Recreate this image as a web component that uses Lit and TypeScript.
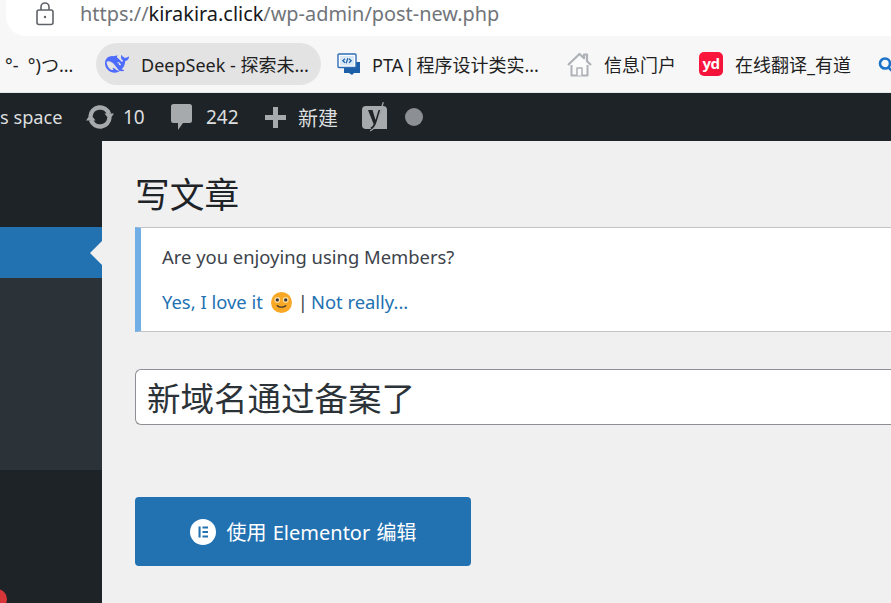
import { LitElement, html, css } from 'lit';
import { customElement } from 'lit/decorators.js';

const lockIcon = html`<svg width="20" height="24" viewBox="0 0 20 24" fill="none" stroke="#5f6368" stroke-width="1.6">
  <rect x="2" y="8" width="16" height="14.5" rx="2"></rect>
  <path d="M6 8V5a4 4 0 0 1 8 0v3"></path>
  <circle cx="10" cy="15" r="1.2" fill="#5f6368" stroke="none"></circle>
</svg>`;

const whaleIcon = html`<svg width="24" height="24" viewBox="0 0 24 24">
  <path fill="#4d6bfe" d="M23.748 4.482c-.254-.124-.364.113-.512.234-.051.039-.094.09-.137.136-.372.397-.806.657-1.373.626-.829-.046-1.537.214-2.163.848-.133-.782-.575-1.248-1.247-1.548-.352-.156-.708-.311-.955-.65-.172-.241-.219-.51-.305-.774-.055-.16-.11-.323-.293-.35-.2-.031-.278.136-.356.276-.313.572-.434 1.202-.422 1.84.027 1.436.633 2.58 1.838 3.393.137.093.172.187.129.323-.082.28-.18.552-.266.833-.055.179-.137.217-.329.14a5.526 5.526 0 01-1.736-1.18c-.857-.828-1.631-1.742-2.597-2.458a11.365 11.365 0 00-.689-.471c-.985-.957.13-1.743.388-1.836.27-.098.093-.432-.779-.428-.872.004-1.67.295-2.687.684a3.055 3.055 0 01-.465.137 9.597 9.597 0 00-2.883-.102c-1.885.21-3.39 1.102-4.497 2.623C.082 8.606-.231 10.684.152 12.85c.403 2.284 1.569 4.175 3.36 5.653 1.858 1.533 3.997 2.284 6.438 2.14 1.482-.085 3.133-.284 4.994-1.86.47.234.962.327 1.78.397.63.059 1.236-.03 1.705-.128.735-.156.684-.837.419-.961-2.155-1.004-1.682-.595-2.113-.926 1.096-1.296 2.746-2.642 3.392-7.003.05-.347.007-.565 0-.845-.004-.17.035-.237.23-.256a4.173 4.173 0 001.545-.475c1.396-.763 1.96-2.015 2.093-3.517.02-.23-.004-.467-.247-.588zM11.581 18c-2.089-1.642-3.102-2.183-3.52-2.16-.392.024-.321.471-.235.763.09.288.207.486.371.739.114.167.192.416-.113.603-.673.416-1.842-.14-1.897-.167-1.361-.802-2.5-1.86-3.301-3.307-.774-1.393-1.224-2.887-1.298-4.482-.02-.386.093-.522.477-.592a4.696 4.696 0 011.529-.039c2.132.312 3.946 1.265 5.468 2.774.868.86 1.525 1.887 2.202 2.891.72 1.066 1.494 2.082 2.48 2.914.348.292.625.514.891.677-.802.09-2.14.11-3.054-.614zm1-6.44a.306.306 0 01.415-.287.302.302 0 01.2.288.306.306 0 01-.31.307.303.303 0 01-.304-.308zm3.11 1.596c-.2.081-.399.151-.59.16a1.245 1.245 0 01-.798-.254c-.274-.23-.47-.358-.552-.758a1.73 1.73 0 01.016-.588c.07-.327-.008-.537-.239-.727-.187-.156-.426-.199-.688-.199a.559.559 0 01-.254-.078c-.11-.054-.2-.19-.114-.358.028-.054.16-.186.192-.21.356-.202.767-.136 1.146.016.352.144.618.408 1.001.782.391.451.462.576.685.914.176.265.336.537.445.848.067.195-.019.354-.25.452z"></path>
</svg>`;

const ptaIcon = html`<svg width="24" height="24" viewBox="0 0 24 24">
  <path fill="#1d5fa8" d="M7 10h16v11h-6l-2 2-3-2H7Z"></path>
  <rect x="1" y="2" width="18" height="13.5" rx="1" fill="#fff" stroke="#2e6db5" stroke-width="1.4"></rect>
  <rect x="3" y="4" width="14" height="9.5" fill="#d9e8f7"></rect>
  <path fill="none" stroke="#1d5fa8" stroke-width="1.2" d="M8 6.8 5.8 8.800 8 10.800M12 6.800l2.200 2L12 10.800M10.800 6.300 9.200 11.300"></path>
</svg>`;

const homeIcon = html`<svg width="25" height="25" viewBox="0 0 25 25" fill="#fbfbfb" stroke="#aeb1b5" stroke-width="2" stroke-linejoin="round">
  <path d="M4.5 12.5V23.5H20.5V12.5"></path>
  <path d="M1 13 12.5 2 17 6.300V2.500H20V9.200L24 13" stroke-width="2.2"></path>
  <path d="M10 23.5V16H15V23.500" stroke-width="1.5"></path>
</svg>`;

const updateIcon = html`<svg width="28" height="24" viewBox="0 0 28 24" fill="#a7aaad">
  <path d="M4.5 11.500A9.500 9.500 0 0 1 23 9" fill="none" stroke="#a7aaad" stroke-width="4.500"></path>
  <path d="M23.500 12.500A9.500 9.500 0 0 1 5 15" fill="none" stroke="#a7aaad" stroke-width="4.500"></path>
  <path d="M18.500 8.500H28L23.500 15ZM0 15.500H9.500L4.500 9Z"></path>
</svg>`;

const commentIcon = html`<svg width="21" height="26" viewBox="0 0 21 26" fill="#a7aaad">
  <path d="M2.500 0h16A2.500 2.500 0 0 1 21 2.500v14a2.500 2.500 0 0 1-2.500 2.500H12l-5 7v-7H2.500A2.500 2.500 0 0 1 0 16.500v-14A2.500 2.500 0 0 1 2.500 0Z"></path>
</svg>`;

const plusIcon = html`<svg width="21" height="21" viewBox="0 0 21 21" fill="#a7aaad">
  <path d="M8 0h5v8h8v5h-8v8H8v-8H0V8h8Z"></path>
</svg>`;

const yoastIcon = html`<svg width="27" height="32" viewBox="0 0 27 32">
  <path fill="#a7aaad" d="M4 5h17a4 4 0 0 1 4 4v19H4a4 4 0 0 1-4-4V9a4 4 0 0 1 4-4Z"></path>
  <path fill="#1d2327" d="M6 9h4.500l3 10 3-10h1.200l1.800 0-5 14c-1 3-2.500 5-5 6l-1-2.500c1.500-.7 2.600-1.700 3.100-3.500Z"></path>
  <path fill="#a7aaad" d="M20.500 1.500 22 1l-6 20c-1 3.500-3 7-7.500 9.500l-.6-1c3.800-2.200 5.600-5.200 6.600-8.500Z"></path>
</svg>`;

const smileIcon = html`<svg width="21" height="21" viewBox="0 0 20 20">
  <circle cx="10" cy="10" r="10" fill="#f9a825"></circle>
  <circle cx="6" cy="7.5" r="2.7" fill="#fde2a8"></circle>
  <circle cx="14" cy="7.5" r="2.7" fill="#fde2a8"></circle>
  <circle cx="6" cy="7.5" r="1.6" fill="#3c3434"></circle>
  <circle cx="14" cy="7.5" r="1.6" fill="#3c3434"></circle>
  <path d="M6 13c2 1.800 6 1.800 8 0" fill="none" stroke="#3c3434" stroke-width="1.3" stroke-linecap="round"></path>
</svg>`;

const elementorIcon = html`<svg width="26" height="26" viewBox="0 0 26 26">
  <circle cx="13" cy="13" r="13" fill="#fff"></circle>
  <path fill="#2271b1" d="M8.500 7.500h2.100v11H8.500ZM12.500 7.500h5.500v2.100h-5.500ZM12.500 11.950h5.500v2.100h-5.500ZM12.500 16.400h5.500v2.100h-5.500Z"></path>
</svg>`;

const searchIcon = html`<svg class="search" width="17" height="15" viewBox="0 0 17 15" fill="none" stroke="#1a73c8" stroke-width="2.6">
  <circle cx="7" cy="6.500" r="5"></circle>
  <path d="M10.500 10.500 14.500 14.500"></path>
</svg>`;

@customElement('app-root')
export class AppRoot extends LitElement {
  static styles = css`
    :host {
      display: flex;
      flex-direction: column;
      width: 891px;
      height: 603px;
      overflow: hidden;
      position: relative;
      background: #f7f7f8;
      font-family: 'Noto Sans', 'Noto Sans CJK SC', sans-serif;
    }

    /* address bar */
    .address-row {
      height: 36px;
      padding-left: 6px;
      flex: none;
    }
    .address {
      height: 36px;
      background: #fff;
      border-radius: 0 0 0 20px;
      display: flex;
      align-items: center;
      padding-left: 29px;
      font-size: 19.9px;
      color: #71757a;
      white-space: nowrap;
    }
    .address svg {
      margin-right: 25px;
      margin-top: -8px;
    }
    .address span {
      margin-top: -9px;
    }
    .address b {
      font-weight: 400;
      color: #16181b;
    }

    /* bookmarks */
    .bookmarks {
      height: 57px;
      flex: none;
      box-sizing: border-box;
      border-bottom: 1px solid #e6e6e8;
      display: flex;
      align-items: center;
      padding-left: 5px;
      font-size: 18px;
      color: #1f1f1f;
      white-space: nowrap;
    }
    .mark {
      display: flex;
      align-items: center;
      gap: 12px;
      height: 42px;
      flex: none;
    }
    .mark.face { width: 91px; }
    .mark.active {
      background: #e3e3e3;
      border-radius: 21px;
      width: 225px;
      box-sizing: border-box;
      padding-left: 9px;
      margin-right: 16px;
    }
    .mark.pta { width: 230px; gap: 11px; word-spacing: -3px; }
    .mark.home { width: 132px; }
    .mark.yd { width: 179px; }
    .yd-tile {
      width: 24px;
      height: 24px;
      border-radius: 5px;
      background: linear-gradient(135deg, #ff1a3d, #f0103a);
      color: #fff;
      font-size: 15px;
      font-weight: 700;
      line-height: 22px;
      text-align: center;
      letter-spacing: -0.5px;
    }
    .search { flex: none; }

    /* admin bar */
    .adminbar {
      height: 48px;
      flex: none;
      background: #1d2327;
      color: #dcdedf;
      display: flex;
      align-items: center;
      font-size: 19px;
      white-space: nowrap;
    }
    .adminbar .site { width: 86px; flex: none; font-size: 18.2px; }
    .adminbar .count { display: flex; align-items: center; flex: none; }
    .count.updates { width: 85px; gap: 9px; }
    .count.comments { width: 94px; gap: 14px; }
    .count.add { width: 97px; gap: 12px; font-size: 20px; }
    .count.yoast { width: 43px; }
    .dot {
      width: 18px;
      height: 18px;
      border-radius: 50%;
      background: #8c8f94;
    }

    /* page body */
    .body {
      flex: 1;
      display: flex;
      min-height: 0;
    }
    .sidebar {
      width: 102px;
      flex: none;
      display: flex;
      flex-direction: column;
      background: #1d2327;
      position: relative;
    }
    .side-top { height: 86px; }
    .side-current {
      height: 51px;
      background: #2271b1;
      display: flex;
      justify-content: flex-end;
      align-items: center;
    }
    .side-arrow {
      width: 0;
      height: 0;
      border: 12px solid transparent;
      border-right-color: #f0f0f1;
      border-left-width: 0;
    }
    .side-sub {
      height: 192px;
      background: #2c3338;
    }
    .badge {
      position: absolute;
      left: -13px;
      bottom: -6px;
      width: 20px;
      height: 20px;
      border-radius: 50%;
      background: #d63638;
    }

    .content {
      flex: 1;
      min-width: 0;
      background: #f0f0f1;
      padding-left: 33px;
    }
    h1 {
      margin: 0;
      height: 86px;
      box-sizing: border-box;
      padding-top: 30px;
      font-size: 34.7px;
      font-weight: 400;
      line-height: 48px;
      color: #1d2327;
    }
    .notice {
      height: 105px;
      box-sizing: border-box;
      background: #fff;
      border: 1px solid #c3c4c7;
      border-left: 6px solid #72aee6;
      border-right: none;
      padding: 14px 0 0 21px;
      font-size: 18.4px;
      color: #3c434a;
    }
    .notice p {
      margin: 0;
      line-height: 30px;
      white-space: nowrap;
    }
    .notice p + p { margin-top: 15px; display: flex; align-items: center; }
    .notice a { color: #2271b1; text-decoration: none; }
    .notice svg { margin: 0 6px 0 8px; }
    .notice .sep { margin-right: 3px; }
    .title-box {
      margin-top: 37px;
      height: 56px;
      box-sizing: border-box;
      background: #fff;
      border: 1px solid #8c8f94;
      border-right: none;
      border-radius: 6px 0 0 6px;
      padding-left: 11px;
      font-size: 33.5px;
      line-height: 56px;
      color: #2c3338;
      white-space: nowrap;
    }
    .edit-btn {
      margin-top: 72px;
      width: 336px;
      height: 69px;
      border-radius: 4px;
      background: #2271b1;
      color: #fff;
      display: flex;
      align-items: center;
      justify-content: center;
      gap: 11px;
      font-size: 20px;
      word-spacing: 1px;
      white-space: nowrap;
    }
  `;

  render() {
    return html`
      <div class="address-row">
        <div class="address">
          ${lockIcon}
          <span>https://<b>kirakira.click</b>/wp-admin/post-new.php</span>
        </div>
      </div>
      <div class="bookmarks">
        <div class="mark face">°-&nbsp;&nbsp;°)つ...</div>
        <div class="mark active">${whaleIcon}<span>DeepSeek - 探索未...</span></div>
        <div class="mark pta">${ptaIcon}<span>PTA | 程序设计类实...</span></div>
        <div class="mark home">${homeIcon}<span>信息门户</span></div>
        <div class="mark yd"><div class="yd-tile">yd</div><span>在线翻译_有道</span></div>
        ${searchIcon}
      </div>
      <div class="adminbar">
        <div class="site">s space</div>
        <div class="count updates">${updateIcon}<span>10</span></div>
        <div class="count comments">${commentIcon}<span>242</span></div>
        <div class="count add">${plusIcon}<span>新建</span></div>
        <div class="count yoast">${yoastIcon}</div>
        <div class="dot"></div>
      </div>
      <div class="body">
        <div class="sidebar">
          <div class="side-top"></div>
          <div class="side-current"><div class="side-arrow"></div></div>
          <div class="side-sub"></div>
          <div class="badge"></div>
        </div>
        <div class="content">
          <h1>写文章</h1>
          <div class="notice">
            <p>Are you enjoying using Members?</p>
            <p><a href="#">Yes, I love it</a>${smileIcon}<span class="sep">|</span><a href="#">Not really...</a></p>
          </div>
          <div class="title-box">新域名通过备案了</div>
          <div class="edit-btn">${elementorIcon}<span>使用 Elementor 编辑</span></div>
        </div>
      </div>
    `;
  }
}
